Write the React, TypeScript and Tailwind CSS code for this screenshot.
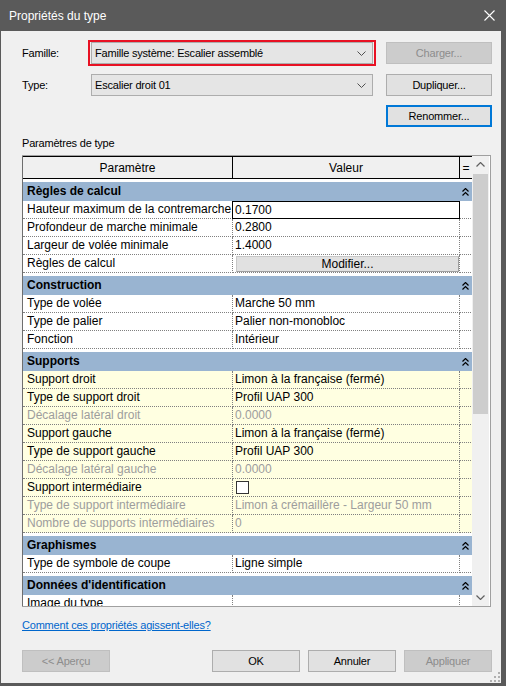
import React from "react";

type Row = { p: string; v?: string; kind?: "edit" | "button" | "check"; dis?: boolean };
type Group = { title: string; yellow?: boolean; rows: Row[] };

const groups: Group[] = [
  {
    title: "Règles de calcul",
    rows: [
      { p: "Hauteur maximum de la contremarche", v: "0.1700", kind: "edit" },
      { p: "Profondeur de marche minimale", v: "0.2800" },
      { p: "Largeur de volée minimale", v: "1.4000" },
      { p: "Règles de calcul", v: "Modifier...", kind: "button" },
    ],
  },
  {
    title: "Construction",
    rows: [
      { p: "Type de volée", v: "Marche 50 mm" },
      { p: "Type de palier", v: "Palier non-monobloc" },
      { p: "Fonction", v: "Intérieur" },
    ],
  },
  {
    title: "Supports",
    yellow: true,
    rows: [
      { p: "Support droit", v: "Limon à la française (fermé)" },
      { p: "Type de support droit", v: "Profil UAP 300" },
      { p: "Décalage latéral droit", v: "0.0000", dis: true },
      { p: "Support gauche", v: "Limon à la française (fermé)" },
      { p: "Type de support gauche", v: "Profil UAP 300" },
      { p: "Décalage latéral gauche", v: "0.0000", dis: true },
      { p: "Support intermédiaire", kind: "check" },
      { p: "Type de support intermédiaire", v: "Limon à crémaillère - Largeur 50 mm", dis: true },
      { p: "Nombre de supports intermédiaires", v: "0", dis: true },
    ],
  },
  {
    title: "Graphismes",
    rows: [{ p: "Type de symbole de coupe", v: "Ligne simple" }],
  },
  {
    title: "Données d'identification",
    rows: [{ p: "Image du type", v: "" }],
  },
];

function Chevron() {
  return (
    <svg width="9" height="5" viewBox="0 0 9 5" className="shrink-0">
      <path d="M0.5 0.5 L4.5 4.5 L8.5 0.5" fill="none" stroke="#505050" strokeWidth="1" />
    </svg>
  );
}

function Collapse() {
  return (
    <svg width="7" height="8" viewBox="0 0 7 8">
      <path d="M0.5 3.5 L3.5 0.5 L6.5 3.5 M0.5 7.5 L3.5 4.5 L6.5 7.5" fill="none" stroke="#000" strokeWidth="1.2" />
    </svg>
  );
}

function DataRow({ row, yellow }: { row: Row; yellow?: boolean }) {
  const bg = yellow ? "bg-[#ffffe1]" : "bg-white";
  const tc = row.dis ? "text-[#9d9d9d]" : "text-black";
  const cell = "h-[18px] border-b border-dotted border-[#808080]";
  return (
    <div className={`flex h-[18px] ${bg}`}>
      <div className={`${cell} w-[210px] shrink-0 border-r pl-[4px] leading-[17px] whitespace-nowrap overflow-hidden ${tc}`}>
        {row.p}
      </div>
      {row.kind === "edit" ? (
        <div className="h-[18px] w-[228px] -ml-px shrink-0 border border-black bg-white pl-[2px] leading-[16px] text-black">
          {row.v}
        </div>
      ) : (
        <div className={`${cell} w-[227px] shrink-0 border-r pl-[2px] leading-[17px] whitespace-nowrap overflow-hidden ${tc}`}>
          {row.kind === "button" ? (
            <div className="ml-px mr-0 mt-px h-[16px] border border-[#c8c8c8] border-b-[#a0a0a0] border-r-[#a0a0a0] bg-[#e1e1e1] text-center leading-[14px] text-black">
              {row.v}
            </div>
          ) : row.kind === "check" ? (
            <div className="ml-[1px] mt-[2px] h-[13px] w-[13px] border border-[#333333] bg-white" />
          ) : (
            row.v
          )}
        </div>
      )}
      <div className={`${cell} w-[13px] shrink-0 border-r`} />
    </div>
  );
}

function GroupHeader({ title }: { title: string }) {
  return (
    <div className="bg-white pt-[3px]">
      <div className="flex h-[19px] items-center bg-[#99b4d1]">
        <div className="flex-1 pl-[4px] font-bold leading-[19px] text-black">{title}</div>
        <div className="flex w-[13px] justify-center pr-[1px]">
          <Collapse />
        </div>
      </div>
    </div>
  );
}

function Btn({ label, w, disabled }: { label: string; w: string; disabled?: boolean }) {
  return (
    <div
      className={`${w} flex h-[22px] shrink-0 items-center justify-center border ${
        disabled ? "border-[#bfbfbf] bg-[#cccccc] text-[#8d8d8d]" : "border-[#adadad] bg-[#e1e1e1] text-black"
      }`}
    >
      {label}
    </div>
  );
}

export default function App() {
  return (
    <div className="flex h-[686px] w-[506px] flex-col overflow-hidden font-['Liberation_Sans',Arial,sans-serif] text-[11px] text-black">
      {/* Title bar */}
      <div className="flex h-[31px] shrink-0 items-center justify-between bg-[#5a5a5a] pl-[9px] pr-[11px]">
        <span className="text-[12px] text-white">Propriétés du type</span>
        <svg width="11" height="11" viewBox="0 0 11 11">
          <path d="M0.5 0.5 L10.5 10.5 M10.5 0.5 L0.5 10.5" stroke="#ffffff" strokeWidth="1.1" />
        </svg>
      </div>

      {/* Body */}
      <div className="relative flex flex-1 flex-col border-b-[3px] border-l border-r-[5px] border-[#5a5a5a] bg-[#f0f0f0] pl-[21px] tracking-[-0.2px]">
        {/* Row 1 */}
        <div className="mt-[9px] flex h-[26px] items-center">
          <div className="w-[66px] shrink-0">Famille:</div>
          <div className="h-[26px] w-[288px] shrink-0 border-2 border-[#e81123] px-px">
            <div className="flex h-full items-center justify-between border border-[#adadad] bg-[#e5e5e5] pl-[3px] pr-[6px]">
              <span>Famille système: Escalier assemblé</span>
              <Chevron />
            </div>
          </div>
          <div className="ml-[10px]">
            <Btn label="Charger..." w="w-[106px]" disabled />
          </div>
        </div>

        {/* Row 2 */}
        <div className="mt-[8px] flex h-[22px] items-center">
          <div className="w-[69px] shrink-0">Type:</div>
          <div className="flex h-[22px] w-[282px] shrink-0 items-center justify-between border border-[#adadad] bg-[#e5e5e5] pl-[3px] pr-[6px]">
            <span>Escalier droit 01</span>
            <Chevron />
          </div>
          <div className="ml-[13px]">
            <Btn label="Dupliquer..." w="w-[106px]" />
          </div>
        </div>

        {/* Row 3 */}
        <div className="ml-[364px] mt-[9px] flex h-[22px] w-[106px] items-center justify-center border-2 border-[#0078d7] bg-[#e1e1e1]">
          Renommer...
        </div>

        <div className="mt-[8px] leading-[16px]">Paramètres de type</div>

        {/* Grid */}
        <div className="mt-[4px] flex h-[452px] w-[469px] border border-[#a0a0a0] bg-white text-[12px] tracking-normal">
          <div className="flex w-[450px] shrink-0 flex-col overflow-hidden border-l border-[#6e6e6e] -ml-px">
            <div className="flex h-[23px] shrink-0 border-y border-black bg-[#f0f0f0]">
              <div className="flex w-[210px] shrink-0 items-center justify-center border-r border-black">Paramètre</div>
              <div className="flex w-[227px] shrink-0 items-center justify-center border-r border-black">Valeur</div>
              <div className="flex w-[13px] shrink-0 items-center justify-center border-r border-black leading-none">=</div>
            </div>
            {groups.map((g) => (
              <div key={g.title}>
                <GroupHeader title={g.title} />
                {g.rows.map((r) => (
                  <DataRow key={r.p} row={r} yellow={g.yellow} />
                ))}
              </div>
            ))}
          </div>
          {/* Scrollbar */}
          <div className="flex w-[17px] shrink-0 flex-col bg-[#f0f0f0]">
            <div className="flex h-[17px] shrink-0 items-center justify-center">
              <svg width="9" height="5" viewBox="0 0 9 5">
                <path d="M0.5 4.5 L4.5 0.5 L8.5 4.5" fill="none" stroke="#606060" strokeWidth="1.2" />
              </svg>
            </div>
            <div className="mx-px mt-px h-[240px] shrink-0 bg-[#cdcdcd]" />
            <div className="flex-1" />
            <div className="flex h-[17px] shrink-0 items-center justify-center">
              <svg width="9" height="5" viewBox="0 0 9 5">
                <path d="M0.5 0.5 L4.5 4.5 L8.5 0.5" fill="none" stroke="#606060" strokeWidth="1.2" />
              </svg>
            </div>
          </div>
        </div>

        <div className="mt-[11px] leading-[14px]">
          <span className="text-[#0066cc] underline">Comment ces propriétés agissent-elles?</span>
        </div>

        {/* Bottom buttons */}
        <div className="mt-[18px] flex h-[22px]">
          <Btn label="<< Aperçu" w="w-[88px]" disabled />
          <div className="ml-[102px] flex gap-[8px]">
            <Btn label="OK" w="w-[88px]" />
            <Btn label="Annuler" w="w-[88px]" />
            <Btn label="Appliquer" w="w-[88px]" disabled />
          </div>
        </div>

        {/* Size grip */}
        <svg width="10" height="10" viewBox="0 0 10 10" className="absolute bottom-[1px] right-[1px]">
          <rect x="8" y="0" width="2" height="2" fill="#b0b0b0" />
          <rect x="4" y="4" width="2" height="2" fill="#b0b0b0" />
          <rect x="8" y="4" width="2" height="2" fill="#b0b0b0" />
          <rect x="0" y="8" width="2" height="2" fill="#b0b0b0" />
          <rect x="4" y="8" width="2" height="2" fill="#b0b0b0" />
          <rect x="8" y="8" width="2" height="2" fill="#b0b0b0" />
        </svg>
      </div>
    </div>
  );
}
